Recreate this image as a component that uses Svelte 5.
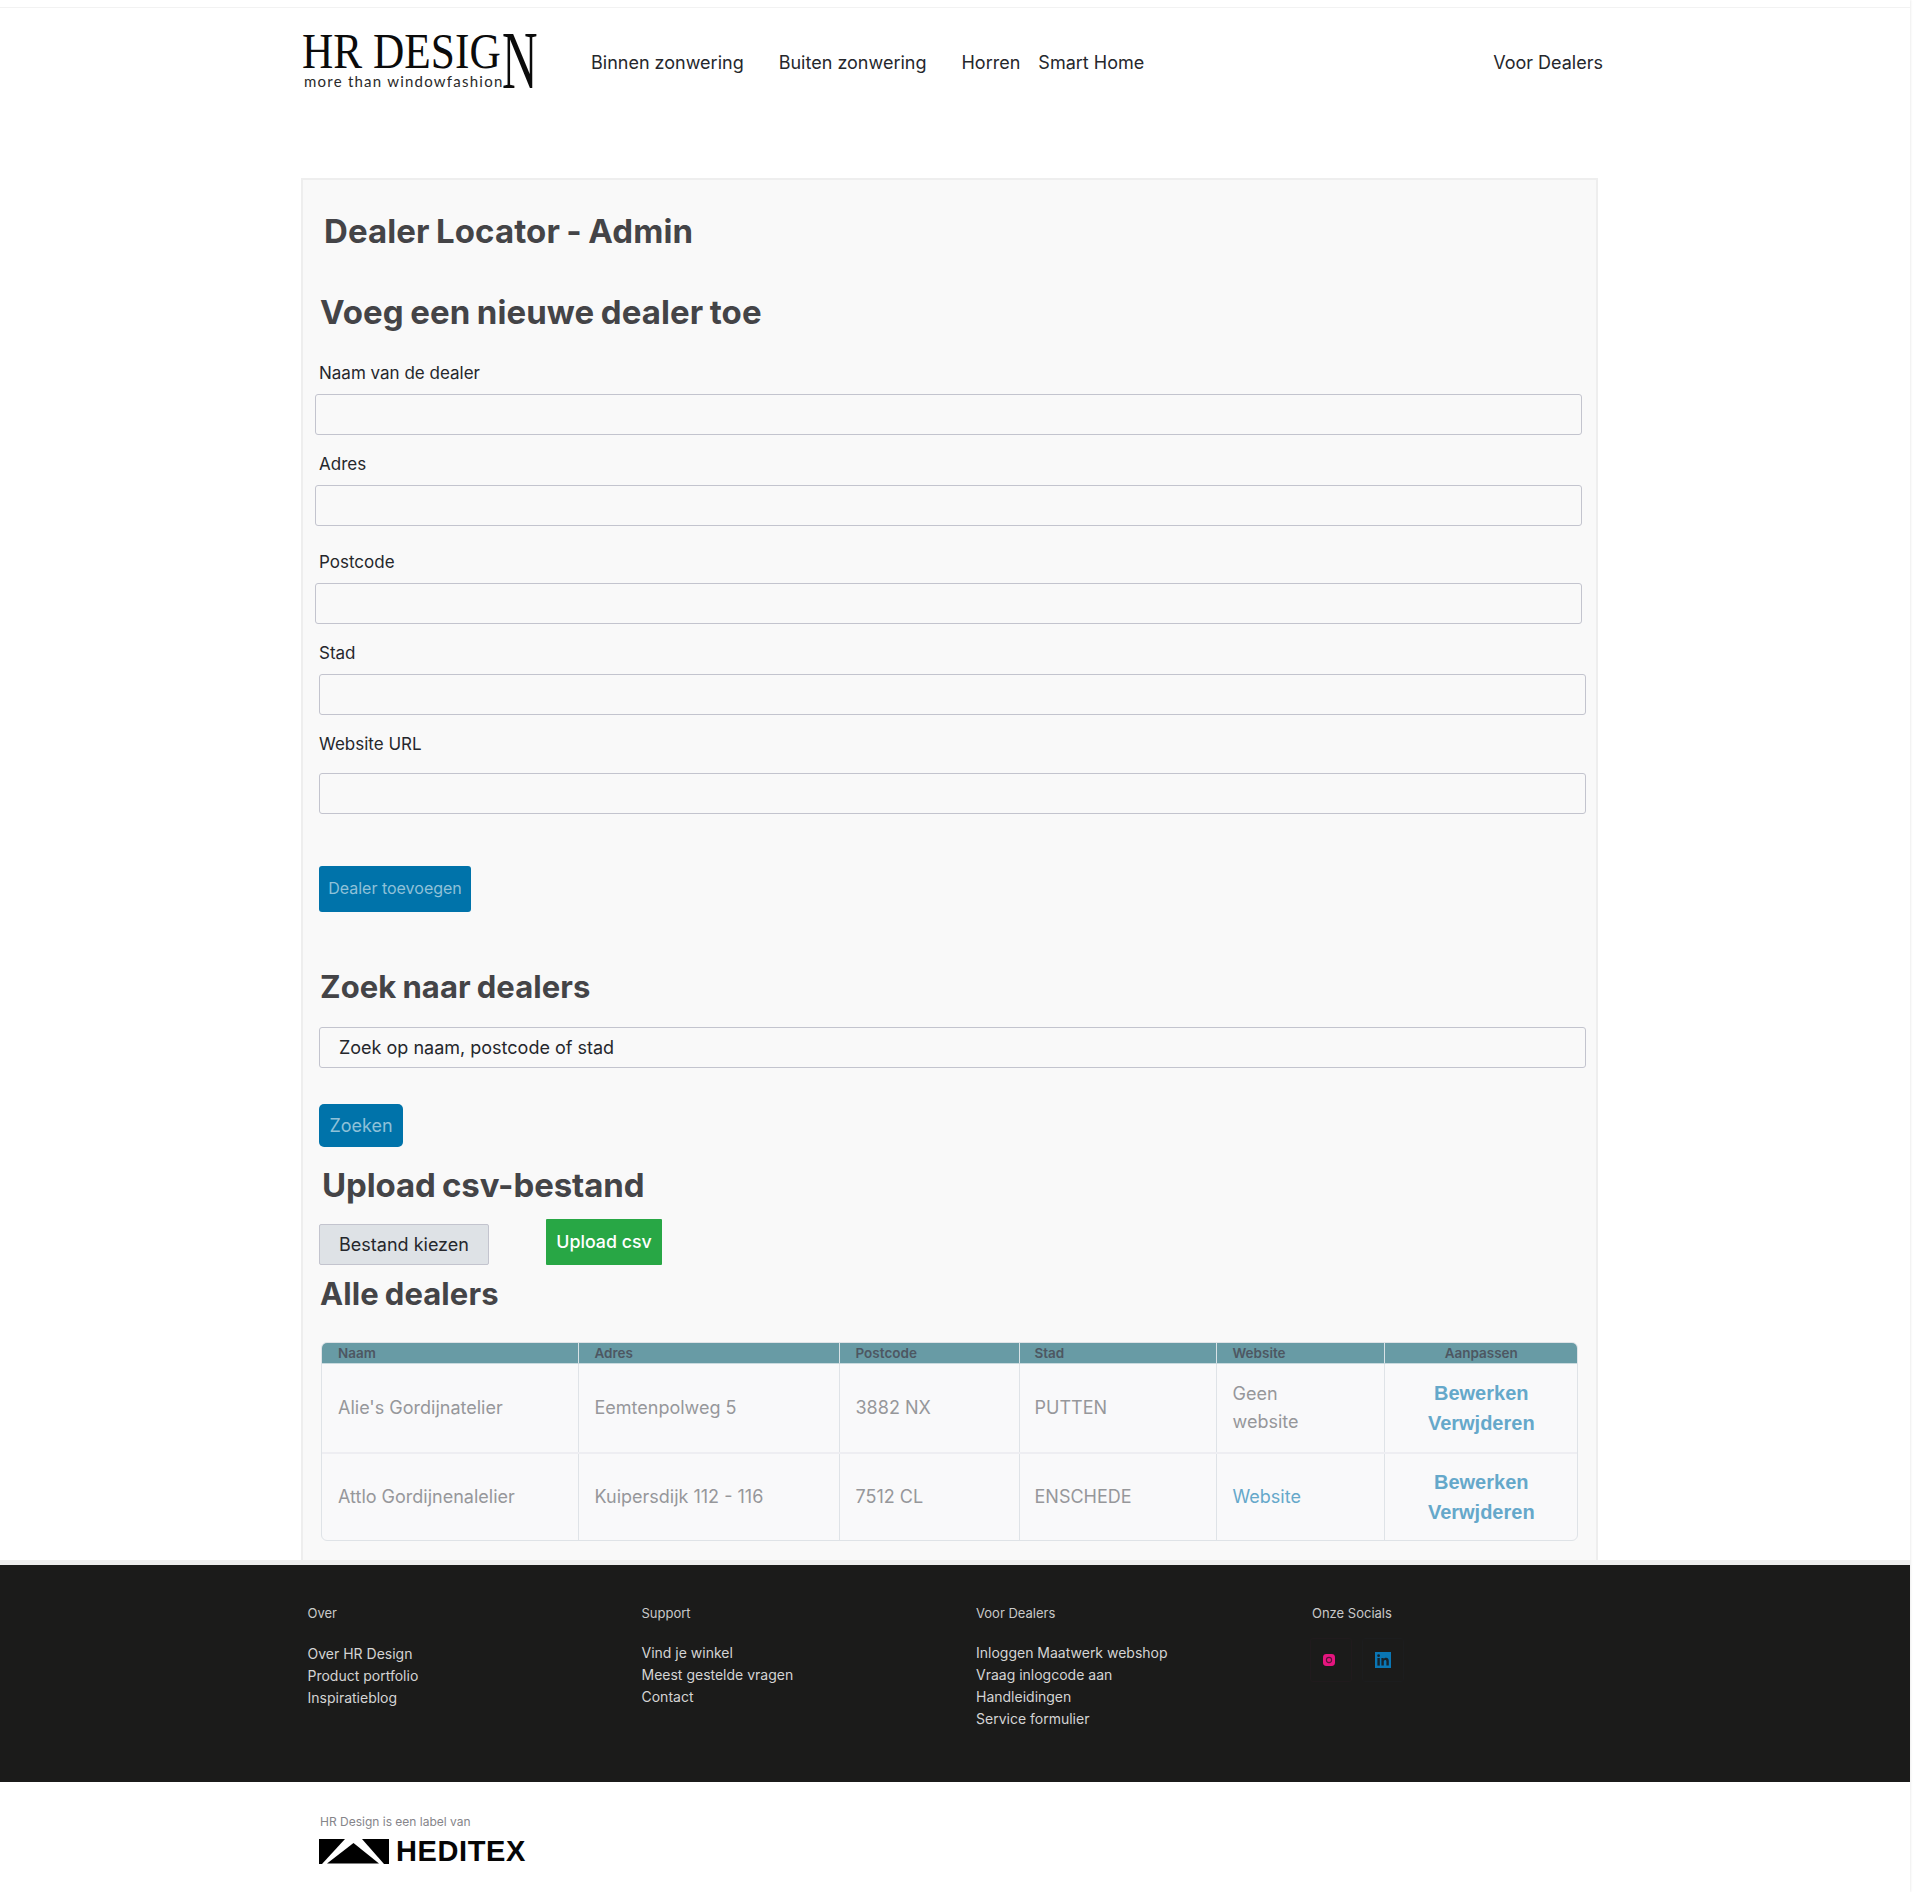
<script>
  const dealers = [
    { naam: "Alie's Gordijnatelier", adres: 'Eemtenpolweg 5', post: '3882 NX', stad: 'PUTTEN', site: null },
    { naam: 'Attlo Gordijnenalelier', adres: 'Kuipersdijk 112 - 116', post: '7512 CL', stad: 'ENSCHEDE', site: 'Website' }
  ];
  const footer = [
    { head: 'Over', cls: 'c1', links: ['Over HR Design', 'Product portfolio', 'Inspiratieblog'] },
    { head: 'Support', cls: 'c2', links: ['Vind je winkel', 'Meest gestelde vragen', 'Contact'] },
    { head: 'Voor Dealers', cls: 'c3', links: ['Inloggen Maatwerk webshop', 'Vraag inlogcode aan', 'Handleidingen', 'Service formulier'] }
  ];
</script>

<div class="page">
  <header class="top">
    <div class="logo">
      <div class="logo-main"><span class="hr">HR DESIG</span><span class="bign">N</span></div>
      <div class="logo-sub">more than windowfashion</div>
    </div>
    <nav class="nav">
      <a class="n1">Binnen zonwering</a>
      <a class="n2">Buiten zonwering</a>
      <a class="n3">Horren</a>
      <a class="n4">Smart Home</a>
      <a class="n5">Voor Dealers</a>
    </nav>
  </header>

  <main class="card">
    <h1>Dealer Locator - Admin</h1>
    <h2 class="big h-add">Voeg een nieuwe dealer toe</h2>

    <label class="lab l1" for="f1">Naam van de dealer</label>
    <input id="f1" class="field shift" />
    <label class="lab l2" for="f2">Adres</label>
    <input id="f2" class="field shift" />
    <label class="lab l3" for="f3">Postcode</label>
    <input id="f3" class="field shift" />
    <label class="lab l2" for="f4">Stad</label>
    <input id="f4" class="field" />
    <label class="lab l2" for="f5">Website URL</label>
    <input id="f5" class="field" />

    <button class="btn add">Dealer toevoegen</button>

    <h2 class="h-search">Zoek naar dealers</h2>
    <input class="field search" placeholder="Zoek op naam, postcode of stad" />
    <button class="btn find">Zoeken</button>

    <h2 class="big h-upload">Upload csv-bestand</h2>
    <div class="upload">
      <span class="file">Bestand kiezen</span>
      <button class="send">Upload csv</button>
    </div>

    <h2 class="h-all">Alle dealers</h2>
    <div class="tablewrap">
      <table>
        <colgroup>
          <col style="width:256px" /><col style="width:261px" /><col style="width:180px" />
          <col style="width:197px" /><col style="width:168px" /><col />
        </colgroup>
        <thead>
          <tr><th>Naam</th><th>Adres</th><th>Postcode</th><th>Stad</th><th>Website</th><th class="mid">Aanpassen</th></tr>
        </thead>
        <tbody>
          {#each dealers as d}
            <tr>
              <td>{d.naam}</td>
              <td>{d.adres}</td>
              <td>{d.post}</td>
              <td>{d.stad}</td>
              <td>
                {#if d.site}<a class="site">{d.site}</a>{:else}<span class="nosite">Geen website</span>{/if}
              </td>
              <td class="mid actions"><a>Bewerken</a><a>Verwjderen</a></td>
            </tr>
          {/each}
        </tbody>
      </table>
    </div>
  </main>

  <div class="band"></div>

  <footer class="foot">
    {#each footer as col}
      <div class="fcol {col.cls}">
        <div class="fhead">{col.head}</div>
        <ul>
          {#each col.links as l}<li>{l}</li>{/each}
        </ul>
      </div>
    {/each}
    <div class="fcol c4">
      <div class="fhead">Onze Socials</div>
      <div class="socials">
        <span class="sbox insta">
          <svg width="12" height="12" viewBox="0 0 12 12"><rect width="12" height="12" rx="3.4" fill="#e6157f" /><circle cx="6" cy="6" r="2.600" fill="none" stroke="#5a1238" stroke-width="1.100" /></svg>
        </span>
        <span class="sbox linked">
          <svg width="16" height="16" viewBox="0 0 16 16"><rect width="16" height="16" fill="#0a76b4" /><rect x="2.400" y="6" width="2.400" height="7.600" fill="#16222b" /><circle cx="3.600" cy="3.700" r="1.400" fill="#16222b" /><path d="M6.400 6h2.300v1.100c.5-.8 1.300-1.300 2.400-1.300 2 0 2.700 1.300 2.700 3.300v4.500h-2.400V9.600c0-1-.3-1.700-1.200-1.700-1 0-1.400.8-1.400 1.700v4H6.400z" fill="#16222b" /></svg>
        </span>
      </div>
    </div>
  </footer>

  <div class="brand">
    <div class="label">HR Design is een label van</div>
    <div class="heditex">
      <svg width="70" height="25" viewBox="0 0 70 25">
        <path d="M0 0H26L3 25H0Z" fill="#000" />
        <path d="M43 0H70V25H65Z" fill="#000" />
        <path d="M34.500 4L60 24.500H8Z" fill="#000" />
      </svg>
      <span>HEDITEX</span>
    </div>
  </div>
</div>

<style>
  :global(body) {
    margin: 0;
    background: #fff;
    font-family: Inter, "Liberation Sans", sans-serif;
  }
  .page {
    width: 1910px;
    min-height: 1892px;
    box-sizing: border-box;
    padding-top: 7px;
    box-shadow: 1px 0 2px #eee;
    color: #25272c;
  }
  .top {
    height: 171px;
    box-sizing: border-box;
    border-top: 1px solid #f2f2f2;
    display: flex;
    align-items: flex-start;
    padding: 25px 307px 0 302px;
  }
  .logo {
    width: 234px;
    height: 56px;
    position: relative;
    color: #0b0b0b;
    flex: none;
  }
  .logo-main {
    font-family: "Liberation Serif", serif;
    line-height: 36px;
    height: 39px;
    white-space: nowrap;
  }
  .hr {
    display: inline-block;
    font-size: 51px;
    transform: scaleX(0.85);
    transform-origin: 0 50%;
  }
  .bign {
    position: absolute;
    left: 200px;
    top: 0;
    font-size: 82px;
    line-height: 56px;
    transform: scaleX(0.6);
    transform-origin: 0 0;
  }
  .logo-sub {
    font-family: Lato, sans-serif;
    font-size: 15px;
    line-height: 18px;
    letter-spacing: 1.230px;
    margin-left: 2px;
    color: #2a2a2a;
    white-space: nowrap;
  }
  .nav {
    flex: 1;
    display: flex;
    font-size: 18px;
    line-height: 26px;
    padding-top: 17px;
  }
  .nav a { color: #25272c; white-space: nowrap; }
  .n1 { margin-left: 55px; }
  .n2 { margin-left: 35px; }
  .n3 { margin-left: 35px; }
  .n4 { margin-left: 18px; }
  .n5 { margin-left: auto; }

  .card {
    margin-left: 301px;
    width: 1297px;
    height: 1382px;
    box-sizing: border-box;
    background: #f9f9f9;
    border: 2px solid #eeeeee;
    border-bottom: 0;
    padding: 32px 0 0 16px;
    display: flow-root;
  }
  h1, h2 {
    font-family: Inter, "Liberation Sans", sans-serif;
    font-weight: 700;
    color: #444447;
    margin: 0;
    white-space: nowrap;
    letter-spacing: 0.100px;
    word-spacing: -1.500px;
  }
  h1 { font-size: 33px; line-height: 38px; padding-bottom: 2px; margin-left: 5px; }
  h2 { font-size: 31px; line-height: 44px; }
  h2.big { font-size: 33px; line-height: 42px; padding-bottom: 2px; }
  .h-add { margin-top: 39px; margin-left: 1px; }
  .h-search { margin-top: 53px; margin-left: 1px; }
  h2.h-upload { margin-top: 17px; margin-left: 3px; letter-spacing: -0.100px; }
  .h-all { margin-top: 7px; margin-left: 1px; }

  .lab {
    display: block;
    font-size: 17px;
    line-height: 24px;
    color: #25272c;
    margin-bottom: 9px;
  }
  .l1 { margin-top: 26px; }
  .l2 { margin-top: 17px; }
  .l3 { margin-top: 24px; }
  .field {
    display: block;
    box-sizing: border-box;
    width: 1267px;
    height: 41px;
    background: #f9f9f9;
    border: 1px solid #c3c4ce;
    border-radius: 3px;
    padding: 0 19px;
    font-family: Inter, sans-serif;
    font-size: 18px;
    outline: 0;
  }
  .shift { margin-left: -4px; }
  #f5 { margin-top: 17px; }
  .search { margin-top: 18px; }
  .search::placeholder { color: #25272c; opacity: 1; }
  .btn {
    display: block;
    background: #0073aa;
    border: 0;
    border-radius: 3px;
    color: #8fc1d8;
    font-family: Inter, sans-serif;
    cursor: pointer;
    padding: 0;
  }
  .add { margin-top: 52px; width: 152px; height: 46px; font-size: 16px; padding-bottom: 2px; }
  .find { margin-top: 36px; width: 84px; height: 43px; font-size: 18px; border-radius: 5px; }
  .upload {
    display: flex;
    align-items: flex-end;
    gap: 57px;
    margin-top: 11px;
  }
  .file {
    box-sizing: border-box;
    width: 170px;
    height: 41px;
    background: #dee2e6;
    border: 1px solid #c3c4ce;
    border-radius: 2px;
    color: #25272c;
    font-size: 18px;
    line-height: 39px;
    text-align: center;
  }
  .send {
    width: 116px;
    height: 46px;
    background: #28a745;
    border: 0;
    border-radius: 1px;
    color: #fff;
    font-family: Inter, sans-serif;
    font-size: 17.800px;
    font-weight: 500;
    padding: 0 0 2px;
  }
  .tablewrap {
    margin-top: 26px;
    margin-left: 2px;
    width: 1257px;
    height: 199px;
    box-sizing: border-box;
    border: 1px solid #dfe3e7;
    border-radius: 6px;
    overflow: hidden;
    background: #f9f9fa;
  }
  table {
    width: 100%;
    height: 100%;
    table-layout: fixed;
    border-collapse: collapse;
    color: #96979a;
    font-size: 18px;
  }
  th {
    height: 20px;
    padding: 0 15px 0 16px;
    background: #689ba5;
    color: #4d5762;
    font-size: 13.500px;
    font-weight: 600;
    line-height: 20px;
    text-align: left;
    border-right: 1px solid #d8e2e6;
    border-bottom: 1px solid #c9dade;
    box-sizing: border-box;
  }
  th.mid { text-align: center; }
  th:last-child, td:last-child { border-right: 0; }
  td {
    padding: 0 15px 0 16px;
    border-right: 1px solid #dfe3e7;
    border-bottom: 2px solid #eeeef2;
    line-height: 28px;
    box-sizing: border-box;
    height: 89px;
  }
  th:nth-child(4), td:nth-child(4) { padding-left: 15px; }
  tbody tr:last-child td { border-bottom: 0; padding-bottom: 2px; }
  .nosite { display: block; max-width: 90px; }
  .mid { text-align: center; }
  .actions a {
    display: block;
    font-family: "Liberation Sans", Arial, sans-serif;
    font-weight: 700;
    font-size: 20px;
    line-height: 30px;
    color: #65a8ca;
  }
  .site { color: #65a8ca; }

  .band { height: 5px; background: #eeeeee; }
  .foot {
    height: 217px;
    background: #1b1b1a;
    color: #d4d4d4;
    display: flex;
    box-sizing: border-box;
    padding: 39px 0 0 307.500px;
    font-size: 14px;
  }
  .fcol { flex: none; }
  .c1 { width: 334px; }
  .c2 { width: 334.500px; }
  .c3 { width: 336px; }
  .fhead { font-size: 13px; line-height: 18px; color: #c9c9c9; }
  ul { list-style: none; margin: 20px 0 0; padding: 0; line-height: 22px; }
  .c1 ul { margin-top: 21px; }
  .socials { display: flex; margin-top: 16px; margin-left: -2px; gap: 10px; }
  .sbox {
    width: 42px;
    height: 44px;
    box-sizing: border-box;
    display: flex;
    justify-content: center;
    align-items: center;
    border: 1px solid #1e1b1c;
    border-radius: 3px;
  }
  .insta { padding-right: 4px; border-color: #201b1d; }
  .linked { border-color: #1c1d1e; }

  .brand { padding: 31px 0 0 319px; }
  .label { font-size: 12px; line-height: 18px; color: #85858a; margin-left: 1px; }
  .heditex { display: flex; align-items: center; gap: 7px; margin-top: 8px; height: 25px; }
  .heditex span {
    font-family: "Liberation Sans", Arial, sans-serif;
    font-weight: 700;
    font-size: 29px;
    letter-spacing: 0.600px;
    line-height: 25px;
    color: #060606;
  }
</style>
